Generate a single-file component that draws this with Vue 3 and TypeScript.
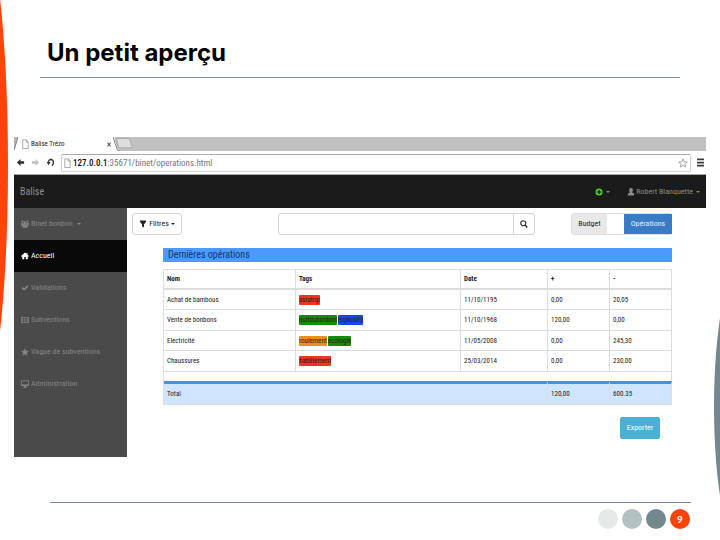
<script setup lang="ts">
import { ref } from 'vue'

interface Tag {
  label: string
  tone: string
}
interface Operation {
  name: string
  tags: Tag[]
  date: string
  plus: string
  minus: string
}
interface MenuItem {
  label: string
  icon: string
  active?: boolean
}

const query = ref('')
const address = '35671/binet/operations.html'

const menu: MenuItem[] = [
  { label: 'Accueil', icon: 'home', active: true },
  { label: 'Validations', icon: 'check' },
  { label: 'Subventions', icon: 'money' },
  { label: 'Vague de subventions', icon: 'star' },
  { label: 'Administration', icon: 'screen' },
]

const icons: Record<string, string> = {
  home: 'M8 1 0 8l1 1.4L2.400 8.300V14.500H6.500V10H9.500V14.500H13.600V8.300L15 9.400 16 8 13 5.300V2H11V3.600Z',
  check: 'M1 8.200 3.300 5.900 6.200 8.800 12.700 2.300 15 4.600 6.200 13.500Z',
  money: 'M0 2H16V14H0ZM1.500 3.500V12.500H14.500V3.500ZM2.500 5.500H5V7H4V9H5V10.500H2.500ZM11 5.500H13.500V10.500H11V9H12V7H11ZM7.300 5H8.900V9.500H10V11H6.200V9.500H7.300V7.500H6.300V6Z',
  star: 'M8 .5 10.300 5.500 15.800 6.100 11.700 9.800 12.800 15.300 8 12.500 3.200 15.300 4.300 9.800 .2 6.100 5.700 5.500Z',
  screen: 'M0 1H16V12H10V14H12V15.500H4V14H6V12H0ZM1.500 2.500V9H14.500V2.500Z',
}

const operations: Operation[] = [
  { name: 'Achat de bambous', tags: [{ label: 'asiatrip', tone: 'red' }], date: '11/10/1195', plus: '0,00', minus: '20,05' },
  {
    name: 'Vente de bonbons',
    tags: [{ label: 'nuitdubonbon', tone: 'green' }, { label: 'explosifs', tone: 'blue' }],
    date: '11/10/1968',
    plus: '120,00',
    minus: '0,00',
  },
  {
    name: 'Electricité',
    tags: [{ label: 'roulement', tone: 'orange' }, { label: 'ecologie', tone: 'green' }],
    date: '11/05/2008',
    plus: '0,00',
    minus: '245,30',
  },
  { name: 'Chaussures', tags: [{ label: 'habillement', tone: 'red' }], date: '25/03/2014', plus: '0,00', minus: '230,00' },
]
</script>

<template>
  <div class="slide">
    <div class="arc arc-left"></div>
    <div class="arc arc-right"></div>

    <header class="slide-head">
      <h1>Un petit aperçu</h1>
    </header>

    <section class="browser">
      <div class="tabs">
        <svg class="tab-edge" viewBox="0 0 4 14"><path d="M0 0H4L1 12 0 14Z" fill="#b5b5b5" /><path d="M4 0 0 13" stroke="#888" fill="none" /></svg>
        <div class="tab">
          <svg class="page-icon" viewBox="0 0 7 11"><path d="M.5 1H4.500L6.500 3.500V10.500H.5ZM4.500 1V3.500H6.500" fill="#fff" stroke="#8b8b8b" stroke-width=".8" /></svg>
          <span>Balise Trézo</span>
          <button class="tab-close" aria-label="Fermer l'onglet">
            <svg viewBox="0 0 4 5"><path d="M.3 .5 3.700 4.500M3.700 .5 .3 4.500" stroke="#333" /></svg>
          </button>
        </div>
        <div class="tab-strip">
          <svg viewBox="0 0 20 14"><path d="M0 0H1L5 14H0Z" fill="#fff" /><path d="M0 0 4 12Q5 14 7 14" fill="none" stroke="#858585" /><path d="M3.500 1.500H15.500Q16.500 1.500 17 3L18.800 9.500Q19 10.800 18 10.800H7Q6 10.800 5.500 9.500Z" fill="#dedede" stroke="#999" stroke-width=".7" /></svg>
        </div>
      </div>

      <div class="toolbar">
        <button class="tool" aria-label="Précédent">
          <svg viewBox="0 0 10 10"><path d="M5 1V3.500H9V6.500H5V9L1 5Z" fill="#2d3033" /></svg>
        </button>
        <button class="tool" aria-label="Suivant">
          <svg viewBox="0 0 10 10"><path d="M5 1V3.500H1V6.500H5V9L9 5Z" fill="#c2c2c2" /></svg>
        </button>
        <button class="tool" aria-label="Actualiser">
          <svg viewBox="0 0 10 10"><path d="M2.600 5.500C2.300 .5 8.500 .5 8.300 5 8.200 6.700 7.500 7.700 6.500 8.400" fill="none" stroke="#333" stroke-width="1.500" /><path d="M.8 4.500H5L2.800 8Z" fill="#333" /></svg>
        </button>
        <div class="address">
          <svg class="page-icon" viewBox="0 0 7 11"><path d="M.5 1H4.500L6.500 3.500V10.500H.5ZM4.500 1V3.500H6.500" fill="#fff" stroke="#8b8b8b" stroke-width=".8" /></svg>
          <span class="url"><b>127.0.0.1</b>:{{ address }}</span>
          <svg class="bookmark" viewBox="0 0 16 16"><path d="M8 1.500 9.900 6 14.800 6.400 11.100 9.600 12.200 14.400 8 11.800 3.800 14.400 4.900 9.600 1.200 6.400 6.100 6Z" fill="#fff" stroke="#777" /></svg>
        </div>
        <button class="menu-button" aria-label="Menu">
          <svg viewBox="0 0 8 10"><path d="M0 1.500H8M0 5H8M0 8.500H8" stroke="#3c3c3c" stroke-width="2" /></svg>
        </button>
      </div>

      <nav class="navbar">
        <a class="brand" href="#">Balise</a>
        <button class="nav-item" aria-label="Ajouter">
          <svg class="icon" viewBox="0 0 16 16"><path d="M8 1A7 7 0 1 0 8 15 7 7 0 1 0 8 1ZM6.500 4.200H9.500V6.500H11.800V9.500H9.500V11.800H6.500V9.500H4.200V6.500H6.500Z" fill="#4ad41c" fill-rule="evenodd" /></svg>
          <span class="caret"></span>
        </button>
        <button class="nav-item">
          <svg class="icon" viewBox="0 0 16 16"><path d="M8 0C11 0 12 2 11.700 4.500 11.500 6.500 10.500 8 10 8.500V9L13 10Q14.500 11 14.500 15H1.500Q1.500 11 3 10L6 9V8.500C5.500 8 4.500 6.500 4.300 4.500 4 2 5 0 8 0Z" fill="currentColor" /></svg>
          <span>Robert Blanquette</span>
          <span class="caret"></span>
        </button>
      </nav>

      <div class="body">
        <aside class="sidebar">
          <a class="side-item" href="#">
            <svg class="icon" viewBox="0 0 16 16"><g fill="currentColor"><circle cx="3" cy="3" r="2.200" /><circle cx="13" cy="3" r="2.200" /><circle cx="8" cy="5.300" r="3" /><path d="M0 6H4.500L5 9 3 11H0ZM16 6H11.500L11 9 13 11H16ZM3 9.500 5.500 8.500H10.500L13 9.500V15.500H3Z" /></g></svg>
            <span>Binet bonbon</span>
            <span class="caret"></span>
          </a>
          <a v-for="item in menu" :key="item.label" class="side-item" :class="{ active: item.active }" href="#">
            <svg class="icon" viewBox="0 0 16 16"><path :d="icons[item.icon]" fill="currentColor" fill-rule="evenodd" /></svg>
            <span>{{ item.label }}</span>
          </a>
        </aside>

        <main class="content">
          <div class="controls">
            <button class="filter">
              <svg class="icon" viewBox="0 0 16 16"><path d="M2 1H14V4L10 8.500V15L6 12.500V8.500L2 4Z" fill="currentColor" /></svg>
              <span>Filtres</span>
              <span class="caret"></span>
            </button>
            <form class="search" @submit.prevent>
              <input v-model="query" type="text" aria-label="Rechercher" />
              <button aria-label="Lancer la recherche">
                <svg class="icon" viewBox="0 0 16 16"><circle cx="6.500" cy="6.500" r="5" fill="none" stroke="#333" stroke-width="2.400" /><path d="M10 10 14.500 15" stroke="#333" stroke-width="3" /></svg>
              </button>
            </form>
            <div class="switch">
              <button class="budget">Budget</button>
              <button class="operations">Opérations</button>
            </div>
          </div>

          <section class="panel">
            <h2>Dernières opérations</h2>
            <table>
              <colgroup>
                <col class="c-name" /><col class="c-tags" /><col class="c-date" /><col class="c-sum" /><col class="c-sum" />
              </colgroup>
              <thead>
                <tr><th>Nom</th><th>Tags</th><th>Date</th><th>+</th><th>-</th></tr>
              </thead>
              <tbody>
                <tr v-for="op in operations" :key="op.name">
                  <td>{{ op.name }}</td>
                  <td>
                    <div class="tags">
                      <span v-for="tag in op.tags" :key="tag.label" class="tag" :class="tag.tone">{{ tag.label }}</span>
                    </div>
                  </td>
                  <td>{{ op.date }}</td>
                  <td>{{ op.plus }}</td>
                  <td>{{ op.minus }}</td>
                </tr>
                <tr class="spacer"><td colspan="5"></td></tr>
              </tbody>
              <tfoot>
                <tr><td colspan="3">Total</td><td>120,00</td><td>600.35</td></tr>
              </tfoot>
            </table>
            <div class="actions"><button class="export">Exporter</button></div>
          </section>
        </main>
      </div>
    </section>

    <footer class="slide-foot">
      <span class="dot pale"></span>
      <span class="dot mid"></span>
      <span class="dot dark"></span>
      <span class="dot page">9</span>
    </footer>
  </div>
</template>

<style>
body {
  margin: 0;
  background: #fff;
}
</style>

<style scoped>
.slide {
  position: relative;
  min-height: 100vh;
  box-sizing: border-box;
  padding: 0 14px;
  overflow: hidden;
  font-family: "Roboto Condensed", "Liberation Sans", Arial, sans-serif;
  font-size: 8px;
  line-height: 12px;
  color: #222;
}
.slide * {
  box-sizing: border-box;
}
button,
input {
  margin: 0;
  padding: 0;
  border: 0;
  background: none;
  font: inherit;
  color: inherit;
}
a {
  color: inherit;
  text-decoration: none;
}
svg {
  display: block;
  flex: none;
}
.arc {
  position: absolute;
  border-radius: 50%;
}
.arc-left {
  left: -52px;
  top: -80px;
  width: 60px;
  height: 490px;
  background: #ff430b;
}
.arc-right {
  right: -54px;
  top: 259px;
  width: 60px;
  height: 296px;
  background: #72888d;
}
.slide-head {
  height: 78px;
  margin: 0 26px 59px;
  padding: 37px 7px 0;
  border-bottom: 1px solid #8397a0;
}
h1 {
  margin: 0;
  font: 700 24px/32px "Century Gothic", Inter, sans-serif;
  color: #000;
}
.tabs {
  display: flex;
  height: 14px;
}
.tab-edge {
  width: 4px;
  height: 14px;
}
.tab {
  display: flex;
  align-items: center;
  gap: 2px;
  width: 95px;
  padding: 0 2px 0 4px;
  font-size: 7px;
}
.page-icon {
  width: 7px;
  height: 10px;
}
.tab-close {
  margin-left: auto;
}
.tab-close svg {
  width: 4px;
  height: 5px;
}
.tab-strip {
  flex: 1;
  background: #c1c1c1;
}
.tab-strip svg {
  width: 20px;
  height: 14px;
}
.toolbar {
  display: flex;
  align-items: center;
  gap: 6px;
  height: 24px;
  padding: 0 2px;
  border-bottom: 1px solid #aaa;
}
.tool svg {
  width: 9px;
  height: 9px;
}
.address {
  display: flex;
  flex: 1;
  align-items: center;
  gap: 2px;
  height: 18px;
  padding: 0 2px;
  border: 1px solid #d0d0d0;
  border-top-color: #aaa;
  border-radius: 2px;
  font-size: 9px;
  color: #777;
}
.address b {
  font-weight: 500;
  color: #111;
}
.bookmark {
  width: 10px;
  height: 12px;
  margin-left: auto;
}
.menu-button svg {
  width: 7px;
  height: 9px;
}
.navbar {
  display: flex;
  align-items: center;
  gap: 17px;
  height: 33px;
  padding: 0 6px;
  background: #1b1b1b;
  color: #8b8b8b;
}
.brand {
  margin-right: auto;
  font-size: 10px;
}
.nav-item {
  display: flex;
  align-items: center;
  gap: 1px;
}
.icon {
  width: 8px;
  height: 8px;
}
.caret {
  margin-left: 2px;
  border: 2px solid transparent;
  border-top-color: currentColor;
  border-bottom: 0;
}
.body {
  display: flex;
  min-height: 249px;
}
.sidebar {
  flex: 0 0 113px;
  background: #4a4a4a;
  color: #858585;
}
.side-item {
  display: flex;
  align-items: center;
  gap: 2px;
  height: 32px;
  padding-left: 7px;
}
.side-item.active {
  background: #090909;
  color: #fff;
}
.content {
  flex: 1;
  min-width: 0;
  padding: 5px 34px 0 5px;
}
.controls {
  display: flex;
  align-items: center;
  height: 22px;
}
.filter {
  display: flex;
  align-items: center;
  justify-content: center;
  gap: 2px;
  width: 50px;
  height: 22px;
  border: 1px solid #d5d5d5;
  border-radius: 3px;
}
.filter .caret {
  margin-left: 0;
}
.search {
  display: flex;
  flex: 1;
  height: 22px;
  margin: 0 36px 0 96px;
}
.search input {
  flex: 1;
  min-width: 0;
  border: 1px solid #d5d5d5;
  border-radius: 3px 0 0 3px;
}
.search button {
  display: grid;
  place-items: center;
  width: 21px;
  border: 1px solid #d5d5d5;
  border-left: 0;
  border-radius: 0 3px 3px 0;
}
.switch {
  display: flex;
  justify-content: space-between;
  width: 101px;
  height: 22px;
  border: 1px solid #ddd;
  border-right: 0;
  border-radius: 3px;
}
.budget {
  width: 35px;
  background: #e8e8e8;
}
.operations {
  width: 48px;
  background: #397bc4;
  color: #e4effa;
}
.panel {
  margin: 13px 0 0 31px;
}
h2 {
  margin: 0 0 7px;
  padding-left: 5px;
  background: #4c99ff;
  font-size: 10px;
  font-weight: 400;
  line-height: 14px;
  color: #17365f;
}
table {
  width: 100%;
  table-layout: fixed;
  border: 1px solid #ddd;
  border-width: 1px 0 0 1px;
  border-spacing: 0;
  font-size: 7px;
  line-height: 10px;
}
.c-name {
  width: 132px;
}
.c-tags {
  width: 165px;
}
.c-date {
  width: 87px;
}
.c-sum {
  width: 62px;
}
th,
td {
  height: 20px;
  padding: 0 3px;
  border: 1px solid #ddd;
  border-width: 0 1px 1px 0;
  text-align: left;
}
th {
  border-bottom-width: 2px;
}
tbody tr:nth-child(even) td {
  height: 21px;
}
tbody .spacer td {
  height: 9px;
  border-bottom: 0;
}
tfoot td {
  height: 24px;
  border-top: 3px solid #4c8ee2;
  background: #cfe4ff;
}
.tags {
  display: flex;
  gap: 1px;
}
.tag {
  border-radius: 1px;
  color: #2a1f10;
}
.red {
  background: #ee3524;
}
.green {
  background: #168a0c;
}
.blue {
  background: #1648f0;
}
.orange {
  background: #f28c1c;
}
.actions {
  display: flex;
  justify-content: flex-end;
  padding: 12px 12px 0 0;
}
.export {
  width: 40px;
  height: 22px;
  border-radius: 2px;
  background: #4bb1d4;
  color: #fff;
}
.slide-foot {
  display: flex;
  justify-content: flex-end;
  gap: 4px;
  margin: 45px 15px 0 36px;
  padding: 6px 1px 0 0;
  border-top: 1px solid #74898f;
}
.dot {
  width: 20px;
  height: 20px;
  border-radius: 50%;
}
.pale {
  background: #e4eaea;
}
.mid {
  background: #b3c0c1;
}
.dark {
  background: #72888d;
}
.page {
  background: #ff430b;
  color: #fff;
  font: 700 10px/20px Lato, sans-serif;
  text-align: center;
}
</style>
